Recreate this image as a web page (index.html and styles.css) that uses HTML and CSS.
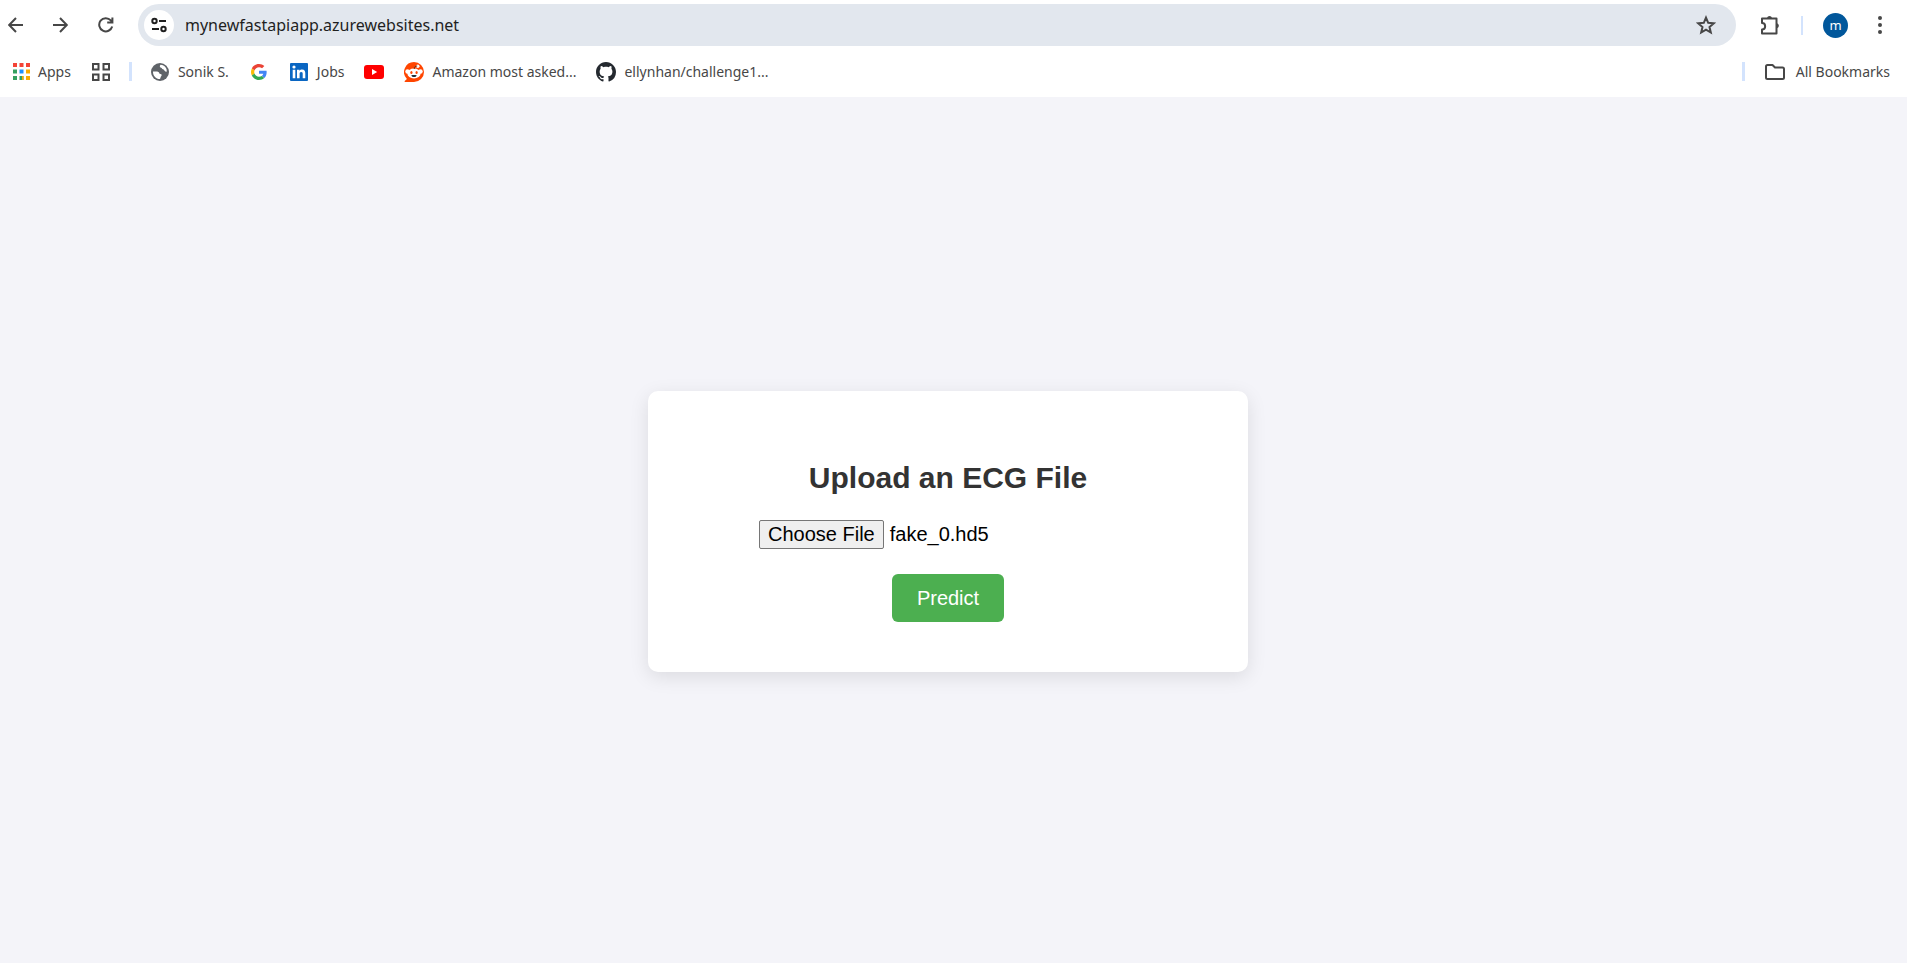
FILE: index.html
```
<!DOCTYPE html>
<html lang="en">
<head>
<meta charset="utf-8">
<title>Upload an ECG File</title>
<link rel="stylesheet" href="styles.css">
</head>
<body>
<header class="chrome">
  <div class="toolbar">
    <nav class="nav" aria-label="Navigation">
      <button class="icon-btn" aria-label="Back"><svg width="16" height="16" viewBox="0 0 16 16" class="line"><path d="M15 8H1.500M8 1L1.200 8L8 15"/></svg></button>
      <button class="icon-btn" aria-label="Forward"><svg width="16" height="16" viewBox="0 0 16 16" class="line"><path d="M0 8H13.500M7 1L13.800 8L7 15"/></svg></button>
      <button class="icon-btn" aria-label="Reload"><svg width="16" height="16" viewBox="0 0 16 16" class="line"><path d="M14.200 9.500A6.600 6.600 0 1 1 12.800 3.400L14.200 5M14.400 .5V5.600H9.200"/></svg></button>
    </nav>
    <div class="omnibox">
      <button class="site-info" aria-label="View site information"><svg width="16" height="16" viewBox="0 0 16 16" class="tune"><circle cx="3.500" cy="4" r="2.200"/><path d="M8 4H15M1 12H8"/><circle cx="12.500" cy="12" r="2.200"/></svg></button>
      <input class="url" type="text" aria-label="Address" value="mynewfastapiapp.azurewebsites.net">
      <button class="icon-btn" aria-label="Bookmark this tab"><svg width="20" height="20" viewBox="0 0 20 20" class="line"><path d="M10 2.600L12.200 7.800L17.800 8.300L13.500 12L14.800 17.500L10 14.600L5.200 17.500L6.500 12L2.200 8.300L7.800 7.800Z"/></svg></button>
    </div>
    <div class="actions">
      <button class="icon-btn" aria-label="Extensions"><svg width="22" height="22" viewBox="0 0 22 22"><path d="M3 4.500H17.500V19.500H3V15.500C7.200 15.500 7.200 9 3 9Z" fill="none" stroke="#474747" stroke-width="2" stroke-linejoin="round"/><path d="M8 4A2.600 2.600 0 0 1 13 4ZM18 9.300A2.600 2.600 0 0 1 18 14.300Z" fill="#474747"/></svg></button>
      <span class="divider thin"></span>
      <button class="avatar" aria-label="Profile">m</button>
      <button class="icon-btn" aria-label="Menu"><svg width="6" height="20" viewBox="0 0 6 20" class="fill"><circle cx="3" cy="3" r="2"/><circle cx="3" cy="10" r="2"/><circle cx="3" cy="17" r="2"/></svg></button>
    </div>
  </div>
  <nav class="bookmarks" aria-label="Bookmarks">
    <a class="bookmark" href="#"><svg width="17" height="17" viewBox="0 0 17 17"><path fill="#f44336" d="M0 0h4v4H0zM6.500 0h4v4h-4zM13 0h4v4h-4z"/><path fill="#34a060" d="M0 6.500h4v4H0zM0 13h4v4H0zM6.500 13h4v4h-4z"/><path fill="#1e90ff" d="M6.500 6.500h4v4h-4z"/><path fill="#fbab00" d="M13 6.500h4v4h-4zM13 13h4v4h-4zM9 13h1.500v4H9z"/></svg><span>Apps</span></a>
    <a class="bookmark" href="#" aria-label="Tab groups"><svg width="20" height="18" viewBox="0 0 18 18" fill="none" stroke="#474747" stroke-width="2"><path d="M1 1h5.500v5.500H1zM11.500 1H17v5.500h-5.500zM1 11.500h5.500V17H1zM11.500 11.500H17V17h-5.500z"/></svg></a>
    <span class="divider mark"></span>
    <a class="bookmark" href="#"><svg width="20" height="18" viewBox="0 0 18 18"><circle cx="9" cy="9" r="9" fill="#5f6368"/><path fill="#fff" d="M9.500 1.800C8.400 3 8.600 4.500 10 4.700c1.200.2.800 1.300 2 1.600 1.600.5 1.500 2.600 3.700 2.500.6-3.200-1.800-6.600-6.200-7zM2 8.500c2 .1 4-.3 5.400.4 1.200.7.600 1.900 2 2.100 1.500.2 1.600 1.300.8 2.200-.8.800-.4 1.500-1.300 2.900C4.800 16 1.800 12.800 2 8.500z"/></svg><span>Sonik S.</span></a>
    <a class="bookmark" href="#" aria-label="Google"><svg width="20" height="16" viewBox="0 0 48 48"><path fill="#ea4335" d="M24 9.500c3.540 0 6.710 1.220 9.210 3.600l6.850-6.850C35.900 2.380 30.470 0 24 0 14.620 0 6.510 5.380 2.560 13.220l7.980 6.190C12.430 13.720 17.740 9.500 24 9.500z"/><path fill="#4285f4" d="M46.980 24.550c0-1.570-.15-3.090-.38-4.550H24v9.020h12.940c-.58 2.960-2.260 5.480-4.780 7.180l7.730 6c4.510-4.180 7.090-10.360 7.090-17.650z"/><path fill="#fbbc05" d="M10.530 28.590c-.48-1.450-.76-2.990-.76-4.590s.27-3.140.76-4.590l-7.980-6.190C.92 16.460 0 20.120 0 24c0 3.880.92 7.540 2.560 10.780l7.970-6.190z"/><path fill="#34a853" d="M24 48c6.480 0 11.930-2.130 15.890-5.810l-7.730-6c-2.150 1.450-4.920 2.300-8.160 2.300-6.260 0-11.570-4.220-13.470-9.910l-7.980 6.190C6.510 42.620 14.620 48 24 48z"/></svg></a>
    <a class="bookmark" href="#"><svg width="20" height="18" viewBox="0 0 18 18"><rect width="18" height="18" rx="1" fill="#0a66c2"/><circle cx="4" cy="4" r="1.600" fill="#fff"/><path fill="#fff" d="M2.700 6.800h2.600v8.500H2.700zM7 6.800h2.500V8c.5-.9 1.400-1.400 2.600-1.400 2.600 0 3.200 1.700 3.200 4v4.700h-2.600V11c0-1.200-.2-2.100-1.500-2.100S9.600 9.800 9.600 11v4.300H7z"/></svg><span>Jobs</span></a>
    <a class="bookmark" href="#" aria-label="YouTube"><svg width="20" height="14" viewBox="0 0 20 14"><rect width="20" height="14" rx="3" fill="#f00"/><path d="M8 4v6l5.200-3z" fill="#fff"/></svg></a>
    <a class="bookmark" href="#"><svg width="20" height="20" viewBox="0 0 20 20"><path fill="#ff4500" d="M10 0a10 10 0 1 1 0 20H1.200c-.6 0-.9-.7-.5-1.100L2.900 17A10 10 0 0 1 10 0z"/><circle cx="3.500" cy="9.500" r="2.200" fill="#fff"/><circle cx="16.500" cy="9.500" r="2.200" fill="#fff"/><ellipse cx="10" cy="11.500" rx="6.600" ry="5" fill="#fff"/><circle cx="13.800" cy="4.200" r="1.700" fill="#fff"/><path d="M10.200 7c0-2 1-3 3-3" stroke="#5a3020" stroke-width="1" fill="none"/><ellipse cx="7.400" cy="10.600" rx="1.100" ry="1.500" fill="#ff4500"/><ellipse cx="12.600" cy="10.600" rx="1.100" ry="1.500" fill="#ff4500"/><path d="M7.300 13.200c1.700-.4 3.700-.4 5.400 0-.5 2.500-4.900 2.500-5.400 0z" fill="#20303a"/></svg><span>Amazon most asked...</span></a>
    <a class="bookmark" href="#"><svg width="20" height="20" viewBox="0 0 16 16" fill="#24292f"><path d="M8 0C3.580 0 0 3.580 0 8c0 3.540 2.290 6.530 5.470 7.590.4.070.55-.17.55-.38 0-.19-.01-.82-.01-1.490-2.010.37-2.530-.49-2.690-.94-.09-.23-.48-.94-.82-1.130-.28-.15-.68-.52-.01-.53.63-.01 1.080.58 1.230.82.72 1.210 1.870.87 2.330.66.070-.52.28-.87.51-1.070-1.780-.2-3.640-.89-3.640-3.950 0-.87.31-1.590.82-2.150-.08-.2-.36-1.020.08-2.120 0 0 .67-.21 2.200.82.64-.18 1.320-.27 2-.27s1.360.09 2 .27c1.530-1.040 2.200-.82 2.200-.82.44 1.100.16 1.920.08 2.120.51.56.82 1.270.82 2.150 0 3.070-1.870 3.750-3.650 3.950.29.25.54.73.54 1.480 0 1.070-.01 1.930-.01 2.200 0 .21.15.46.55.38A8.010 8.010 0 0 0 16 8c0-4.420-3.580-8-8-8z"/></svg><span>ellynhan/challenge1...</span></a>
    <span class="divider push"></span>
    <a class="bookmark all" href="#"><svg width="20" height="16" viewBox="0 0 20 16" fill="none" stroke="#474747" stroke-width="2" stroke-linejoin="round"><path d="M1 2.500Q1 1 2.500 1H7.500L10 3.500H17.500Q19 3.500 19 5V13.500Q19 15 17.500 15H2.500Q1 15 1 13.500Z"/></svg><span>All Bookmarks</span></a>
  </nav>
</header>
<main class="page">
  <form class="card">
    <h2 class="title"><label for="ecg">Upload an ECG File</label></h2>
    <input class="file" id="ecg" type="file">
    <button class="submit" type="button">Predict</button>
  </form>
</main>
<script src="script.js"></script>
</body>
</html>
```
FILE: styles.css
```
* { box-sizing: border-box; }
body {
  margin: 0;
  min-height: 100vh;
  display: flex;
  flex-direction: column;
  background: #f4f4f9;
  font-family: "Liberation Sans", Arial, sans-serif;
}
svg { display: block; flex: none; }
button, input { font: inherit; }
.chrome {
  background: #fff;
  font-family: "Noto Sans", "Open Sans", sans-serif;
  color: #474747;
}
.toolbar { display: flex; align-items: center; padding: 4px 24px 0 8px; }
.nav { display: flex; gap: 29px; margin-right: 24px; }
.icon-btn { border: 0; padding: 0; background: none; }
.line { fill: none; stroke: #474747; stroke-width: 2; }
.tune { fill: none; stroke: #1f1f1f; stroke-width: 2; }
.fill { fill: #474747; }
.omnibox {
  flex: 1;
  display: flex;
  align-items: center;
  height: 42px;
  padding: 0 20px 0 6px;
  border-radius: 21px;
  background: #e2e7ee;
}
.site-info {
  display: grid;
  place-items: center;
  width: 30px;
  height: 30px;
  padding: 0;
  border: 0;
  border-radius: 50%;
  background: #fff;
}
.url {
  flex: 1;
  margin-left: 11px;
  padding: 0;
  border: 0;
  background: none;
  color: #1f1f1f;
  font-size: 16px;
}
.actions { display: flex; align-items: center; margin-left: 23px; }
.divider { width: 3px; height: 19px; background: #d3e3fd; }
.thin { width: 2px; margin: 0 20px; }
.avatar {
  width: 25px;
  height: 25px;
  margin-right: 29px;
  padding: 0;
  border: 0;
  border-radius: 50%;
  background: #01579b;
  color: #fff;
  font-size: 13px;
  line-height: 24px;
}
.bookmarks {
  display: flex;
  align-items: center;
  gap: 20px;
  height: 51px;
  padding: 0 17px 0 13px;
}
.bookmark {
  display: flex;
  align-items: center;
  gap: 8px;
  color: #474747;
  font-size: 14px;
  white-space: nowrap;
  text-decoration: none;
}
.all { gap: 11px; }
.mark { margin: 0 -2px; }
.push { margin-left: auto; }
.page {
  flex: 1;
  display: grid;
  place-items: center;
  padding: 3px 11px 0 0;
}
.card {
  display: flex;
  flex-direction: column;
  align-items: center;
  width: 600px;
  max-width: 100%;
  padding: 70px 50px 50px;
  border-radius: 10px;
  background: #fff;
  box-shadow: 0 5px 19px rgba(0, 0, 0, 0.1);
}
.title { margin: 0 0 25px; color: #333; font-size: 30px; line-height: 34px; }
.file { width: 378px; margin-bottom: 25px; color: #000; font-size: 20px; }
.file::file-selector-button {
  height: 29px;
  margin: 0 6px 0 0;
  padding: 0 8px;
  border: 1px solid #767676;
  border-radius: 2px;
  background: #efefef;
  color: #000;
  font: inherit;
}
.submit {
  height: 48px;
  padding: 0 25px;
  border: 0;
  border-radius: 6px;
  background: #4caf50;
  color: #fff;
  font-size: 20px;
}
```
FILE: script.js
```
// Preselect the sample recording in the file picker.
const transfer = new DataTransfer();
transfer.items.add(new File([""], "fake_0.hd5"));
document.getElementById("ecg").files = transfer.files;
```
